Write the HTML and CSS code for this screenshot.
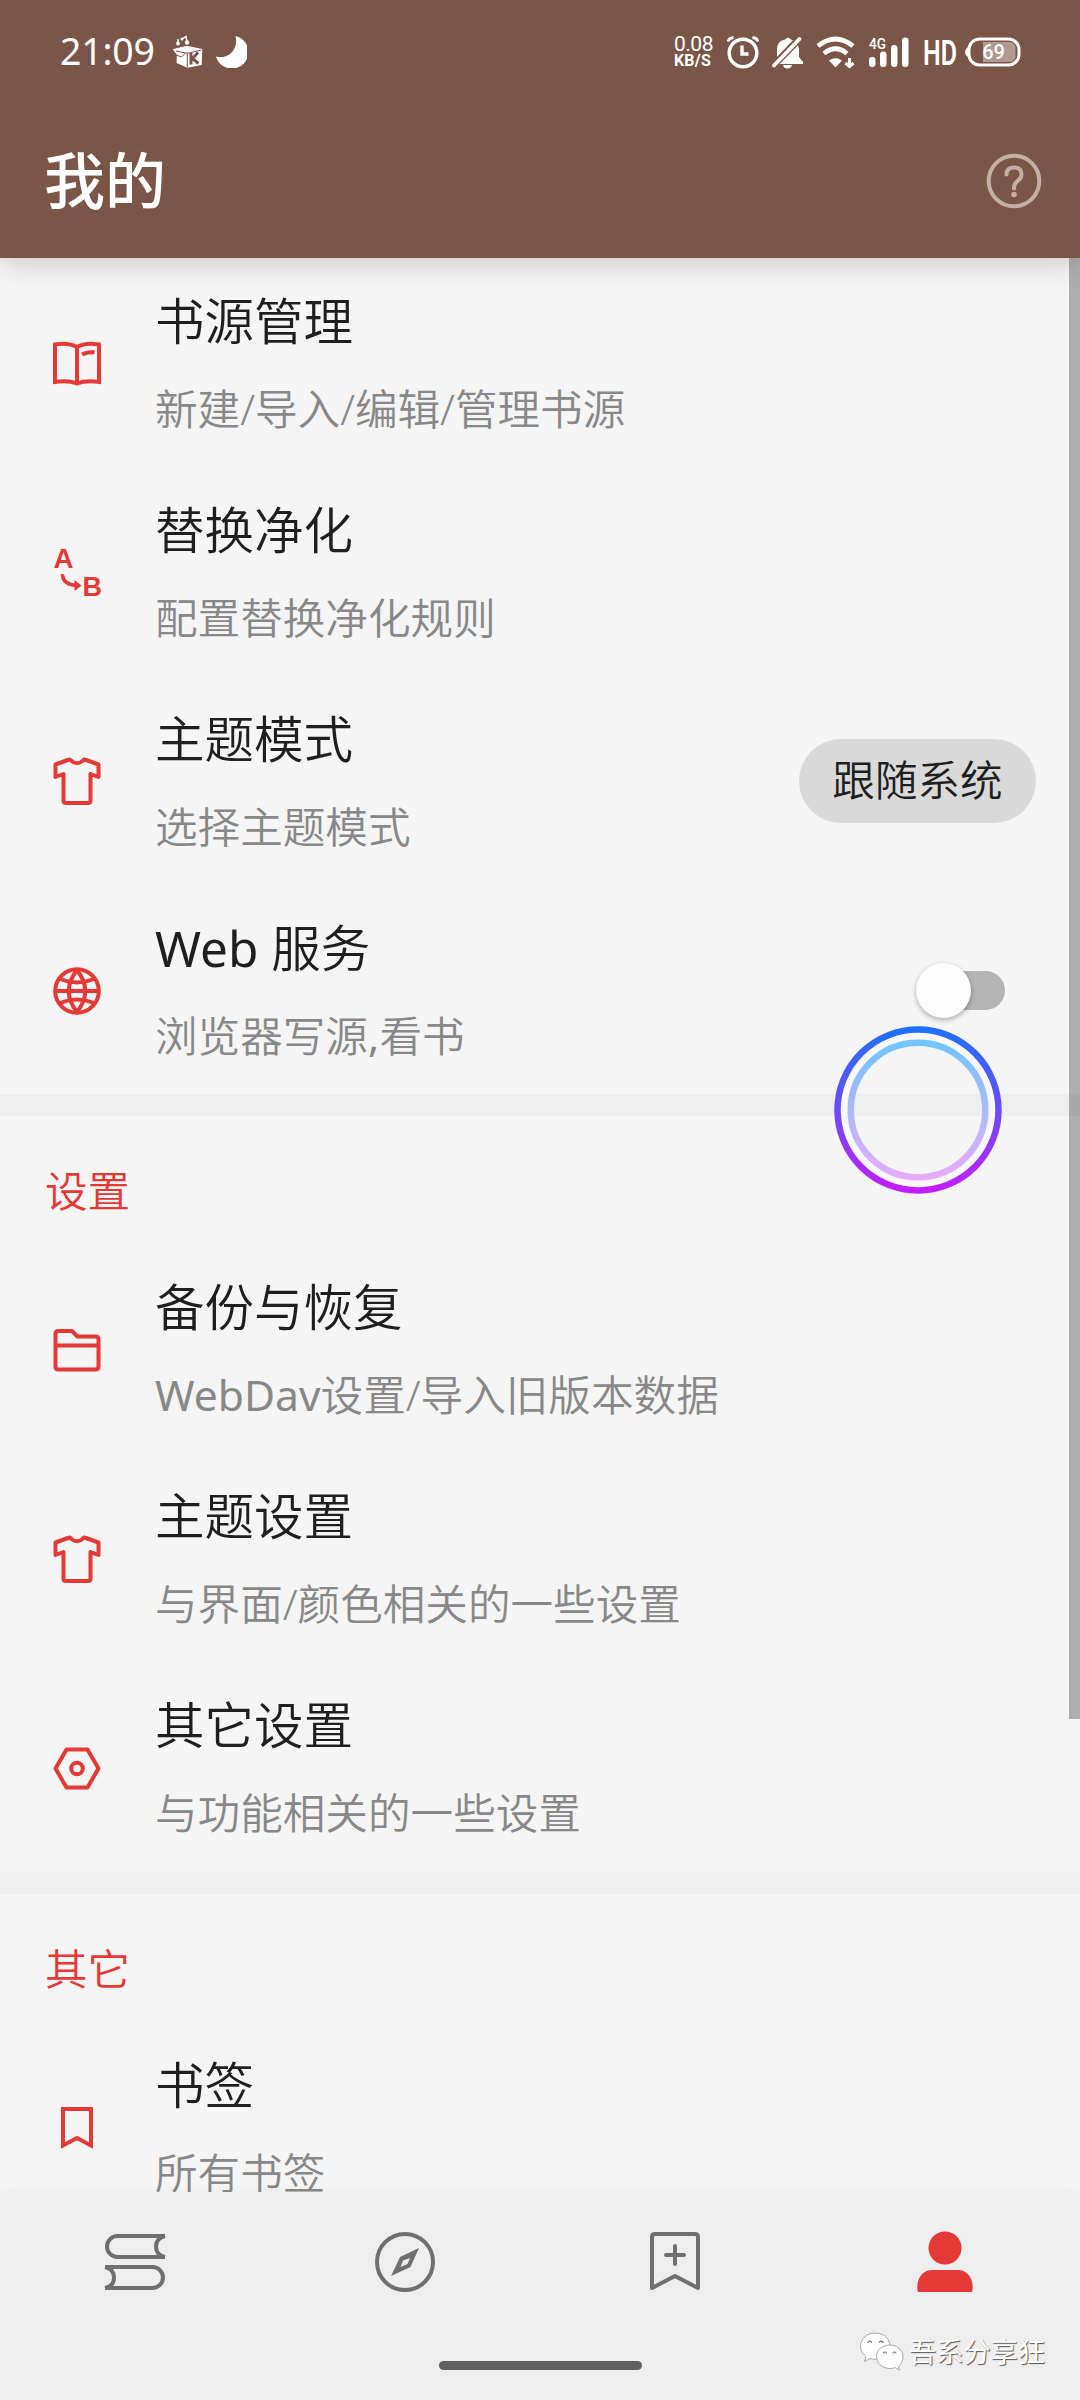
FILE: index.html
```html
<!DOCTYPE html>
<html lang="zh-CN">
<head>
<meta charset="utf-8">
<title>我的</title>
<link rel="stylesheet" href="styles.css">
</head>
<body>
<svg width="0" height="0" class="defs">
  <defs>
    <g id="shirt" fill="none" stroke="currentColor" stroke-width="4" stroke-linejoin="round">
      <path d="M24 12 26 11.500Q33 19 40 11.500L42 12 54.500 16.500V29L46.500 26V52.500Q46.500 55 44 55H22Q19.500 55 19.500 52.500V26L11.500 29V16.500Z"/>
    </g>
    <linearGradient id="ringOuter" x1="0" y1="0" x2="0" y2="1"><stop offset="0" stop-color="#2070fb"/><stop offset=".5" stop-color="#6b4cf6"/><stop offset="1" stop-color="#c31dff"/></linearGradient>
    <linearGradient id="ringInner" x1="0" y1="0" x2="0" y2="1"><stop offset="0" stop-color="#72c5ff"/><stop offset=".5" stop-color="#adb9ff"/><stop offset="1" stop-color="#e5acff"/></linearGradient>
  </defs>
</svg>
<div class="phone">
  <header class="header">
    <div class="status">
      <div class="status-left">
        <span class="clock">21:09</span>
        <svg class="app" width="32" height="34" viewBox="0 0 32 34"><path fill="#fff" d="M.7 14.300 14.700 10.700 30.300 14 29.700 30 15.300 32.700 4.700 28V19.500Z"/><path d="M4 16 15.300 18.300 29.500 15M15.300 18.300V32.500M4 20 9.500 22 13.500 18" fill="none" stroke="#7a5548" stroke-width="1"/><path d="M19 18V29.500M26 17.500 20.500 23.500 26.500 28.500" fill="none" stroke="#7a5548" stroke-width="3"/><path d="M6 8V4M10 4 14 1.500 15 7" fill="none" stroke="#fff" stroke-width="1.400"/><circle cx="6" cy="8.500" r="1.900" fill="#fff"/><circle cx="10" cy="4" r="1.500" fill="#fff"/><circle cx="15" cy="7.500" r="2.200" fill="#fff"/></svg>
        <svg class="moon" width="31" height="32" viewBox="0 0 31 32"><path fill="#fff" d="M19.500 0A16.500 16.500 0 1 1 0 20.500C11 24 23 14 19.500 0Z"/></svg>
      </div>
      <div class="status-right">
        <div class="speed"><span class="speed-num">0.08</span><span class="speed-unit">KB/S</span></div>
        <svg class="alarm" width="32" height="34" viewBox="0 0 32 34" fill="none" stroke="#fff"><circle cx="16" cy="18" r="13.800" stroke-width="3.500"/><path d="M15 10.500V19H21.500" stroke-width="3.400"/><path d="M1 6.500Q2 3 6.500 2.500M31 6.500Q30 3 25.500 2.500" stroke-width="2.800"/></svg>
        <svg class="bell" width="32" height="34" viewBox="0 0 32 34"><path fill="#fff" d="M5 24V14Q5 6 13 4.500 Q16 1 19 4.500Q26 6 27 14V22L31 27V29H1ZM11 30H20Q19 33.500 15.500 33.500Q12 33.500 11 30Z"/><path d="M0 32 29 2" stroke="#7a5548" stroke-width="7"/><path d="M2 30.500 27.500 4" stroke="#fff" stroke-width="3.800" stroke-linecap="round"/></svg>
        <svg class="wifi" width="40" height="34" viewBox="0 0 40 34"><path d="M2 11Q19.500-3 37 11M8 18.500Q19.500 9 31 18.500" fill="none" stroke="#fff" stroke-width="4.700"/><path d="M13 25.500Q19.500 21 26 25.500L19.500 32.500Z" fill="#fff"/><path d="M33.500 23V30M29.500 28 33.500 31.500 37.500 28" stroke="#fff" stroke-width="3" fill="none"/></svg>
        <svg class="signal" width="42" height="34" viewBox="0 0 42 34"><text x="0" y="14" class="net" textLength="17" lengthAdjust="spacingAndGlyphs">4G</text><g fill="#fff"><rect x="0" y="22" width="6.500" height="10" rx="3.200"/><rect x="11" y="16.500" width="6.500" height="15.500" rx="3.200"/><rect x="22" y="10" width="6.500" height="22" rx="3.200"/><rect x="33" y="2.500" width="6.500" height="29.500" rx="3.200"/></g></svg>
        <svg class="hd" width="34" height="48" viewBox="0 0 34 48"><text x="0" y="36.500" class="hd-text" textLength="34" lengthAdjust="spacingAndGlyphs">HD</text></svg>
        <svg class="battery" width="56" height="30" viewBox="0 0 56 30"><rect x="4" y="2" width="50" height="26" rx="10.500" fill="none" stroke="#fff" stroke-width="3"/><path d="M3 10Q0 12 0 15T3 20Z" fill="#fff"/><path d="M18 5H44Q50.500 5 50.500 11V19Q50.500 25 44 25H18Z" fill="#b09a93"/><text x="28.500" y="22" text-anchor="middle" class="level">69</text></svg>
      </div>
    </div>
    <div class="appbar">
      <h1 class="appbar-title">我的</h1>
      <svg class="help" width="56" height="56" viewBox="0 0 56 56" fill="none" stroke="#c5aea5" stroke-width="4"><circle cx="28" cy="28" r="25.300"/><path d="M20.500 21.500Q20.500 14.500 28 14.500T35.500 21.500Q35.500 25 31.500 28T28 35.500" stroke-linecap="round"/><circle cx="28" cy="41.500" r="2.800" fill="#c5aea5" stroke="none"/></svg>
    </div>
  </header>

  <main class="content">
    <section class="group group-first">
      <div class="row">
        <svg class="row-icon" viewBox="0 0 66 66" fill="none" stroke="currentColor" stroke-width="4"><path d="M11 14.500Q24 12 33 17Q42 12 55 14.500V52Q42 50 33 53.500Q24 50 11 52ZM33 17V53"/><path d="M38 24.500Q43 22 50.500 22" stroke-width="4"/></svg>
        <div class="row-text"><div class="title">书源管理</div><div class="summary">新建/导入/编辑/管理书源</div></div>
      </div>
      <div class="row">
        <svg class="row-icon" viewBox="0 0 66 66"><text x="9.500" y="29" class="ab" textLength="20" lengthAdjust="spacingAndGlyphs">A</text><text x="38.500" y="57" class="ab" textLength="19.500" lengthAdjust="spacingAndGlyphs">B</text><path d="M18.500 36.500Q20 46 33 46.500" fill="none" stroke="currentColor" stroke-width="3.600" stroke-linecap="round"/><path d="M30.500 41 37.500 46.500 30.500 52Z" fill="currentColor"/></svg>
        <div class="row-text"><div class="title">替换净化</div><div class="summary">配置替换净化规则</div></div>
      </div>
      <div class="row">
        <svg class="row-icon" viewBox="0 0 66 66"><use href="#shirt"/></svg>
        <div class="row-text"><div class="title">主题模式</div><div class="summary">选择主题模式</div></div>
        <div class="chip">跟随系统</div>
      </div>
      <div class="row">
        <svg class="row-icon" viewBox="0 0 66 66" fill="none" stroke="currentColor" stroke-width="4"><circle cx="33" cy="34" r="21.800"/><path d="M33 13Q16.500 34 33 55Q49.500 34 33 13M11 34H55M16 22Q33 29 50 22M16 46Q33 39 50 46"/></svg>
        <div class="row-text"><div class="title"><span class="latin">Web </span>服务</div><div class="summary">浏览器写源<span class="latin">,</span>看书</div></div>
        <div class="switch"><div class="thumb"></div></div>
      </div>
    </section>
    <section class="group">
      <h2 class="group-title">设置</h2>
      <div class="row">
        <svg class="row-icon" viewBox="0 0 66 66" fill="none" stroke="currentColor" stroke-width="4" stroke-linejoin="round"><path d="M11.500 17Q11.500 14 14.500 14H28L33.500 19.500H51.500Q54.500 19.500 54.500 22.500V49.500Q54.500 52.500 51.500 52.500H14.500Q11.500 52.500 11.500 49.500ZM11.500 28.500H54.500"/></svg>
        <div class="row-text"><div class="title">备份与恢复</div><div class="summary"><span class="latin">WebDav</span>设置/导入旧版本数据</div></div>
      </div>
      <div class="row">
        <svg class="row-icon" viewBox="0 0 66 66"><use href="#shirt"/></svg>
        <div class="row-text"><div class="title">主题设置</div><div class="summary">与界面/颜色相关的一些设置</div></div>
      </div>
      <div class="row">
        <svg class="row-icon" viewBox="0 0 66 66" fill="none" stroke="currentColor" stroke-width="4" stroke-linejoin="round"><path d="M22.500 14.500H43.500L54.500 33.500 43.500 52.500H22.500L11.500 33.500Z"/><circle cx="33" cy="33.500" r="5.800"/></svg>
        <div class="row-text"><div class="title">其它设置</div><div class="summary">与功能相关的一些设置</div></div>
      </div>
    </section>
    <section class="group">
      <h2 class="group-title">其它</h2>
      <div class="row">
        <svg class="row-icon" viewBox="0 0 66 66" fill="none" stroke="currentColor" stroke-width="4"><path d="M19 14H47V50.500L33 43 19 50.500Z"/></svg>
        <div class="row-text"><div class="title">书签</div><div class="summary">所有书签</div></div>
      </div>
    </section>
    <div class="scrollbar"></div>
  </main>

  <footer class="footer">
    <nav class="nav">
      <svg width="66" height="66" viewBox="0 0 66 66" fill="none" stroke="#6f6f6f" stroke-width="4"><path d="M63 7H15.500A10.500 10.500 0 0 0 15.500 28H63M63 7Q54 9 54 17.500T63 28M3 38H50.500A10.500 10.500 0 0 1 50.500 59H3M3 38Q12 40 12 48.500T3 59"/></svg>
      <svg width="66" height="66" viewBox="0 0 66 66" fill="none" stroke="#6f6f6f" stroke-width="4"><circle cx="33" cy="33" r="28"/><path fill="#6f6f6f" fill-rule="evenodd" stroke="none" d="M47 19 28 28 19 47 38.500 38ZM38 29 35.500 35 28.500 38 31 31.500Z"/></svg>
      <svg width="66" height="66" viewBox="0 0 66 66" fill="none" stroke="#6f6f6f" stroke-width="4" stroke-linejoin="round" stroke-linecap="round"><path d="M10 59V8Q10 5 13 5H53Q56 5 56 8V59L33 47Z"/><path d="M33 17V35M24 26H42"/></svg>
      <svg width="66" height="66" viewBox="0 0 66 66" fill="#e53935"><circle cx="33" cy="19" r="16.500"/><path d="M5.500 61.500C4 48 12 41 20 41H46C54 41 62 48 60.500 61.500Q60.500 63 59 63H7Q5.500 63 5.500 61.500Z"/></svg>
    </nav>
    <div class="home-bar"></div>
    <div class="watermark">
      <svg width="44" height="40" viewBox="0 0 44 40"><g fill="#fff" stroke="#aaa" stroke-width="1"><path d="M15 1C7 1 .500 7 .500 14Q.500 20.500 6 24.500L4.500 29.500 10 26.500Q14 28 18 27C30 26 31 17 30 12 Q27 1 15 1Z"/><path d="M30 13C22 13 16.500 18 16.500 24.500S22 36.500 30 36.500Q33 36.500 35 35.500L39.500 38 38.500 34Q43 30.500 43 24.500C43 18 37 13 30 13Z"/></g><g fill="none" stroke="#777" stroke-width="1.200"><path d="M8 11a1.800 1.800 0 0 1 3.600 0M19.500 11a1.800 1.800 0 0 1 3.600 0M23.500 21.500a1.500 1.500 0 0 1 3 0M33 21.500a1.500 1.500 0 0 1 3 0"/></g></svg>
      <span>吾系分享狂</span>
    </div>
  </footer>

  <svg class="touch-ring" width="168" height="168" viewBox="0 0 168 168" fill="none"><circle cx="84" cy="84" r="74" stroke="#f9f9fd" stroke-width="12"/><circle cx="84" cy="84" r="80.500" stroke="url(#ringOuter)" stroke-width="6.500"/><circle cx="84" cy="84" r="67.300" stroke="url(#ringInner)" stroke-width="6.500"/></svg>
</div>
</body>
</html>
```
FILE: styles.css
```css
* { box-sizing: border-box; }
body { margin: 0; background: #f5f5f5; font-family: "Noto Sans", "Noto Sans CJK SC", sans-serif; color: #1f1f1f; }
.defs { position: absolute; }
.phone { position: relative; width: 1080px; height: 2400px; overflow: hidden; display: flex; flex-direction: column; }
svg { display: block; flex: none; }

.header { height: 258px; flex: none; background: #7a5548; color: #fff; position: relative; z-index: 2; box-shadow: 0 4px 28px rgba(0,0,0,.2); }
.status { height: 104px; padding: 0 59px 0 60px; display: flex; justify-content: space-between; align-items: center; }
.status-left, .status-right { display: flex; align-items: center; }
.clock { font-size: 37.5px; line-height: 44px; width: 94px; letter-spacing: -.2px; white-space: nowrap; padding-bottom: 2px; }
.app { margin-left: 18px; }
.moon { margin-left: 12px; }
.speed { display: flex; flex-direction: column; width: 41px; font-family: Roboto, sans-serif; }
.speed-num { font-size: 21px; line-height: 18px; letter-spacing: -.5px; }
.speed-unit { font-size: 16px; line-height: 16px; font-weight: 700; letter-spacing: .2px; }
.alarm { margin-left: 12px; }
.bell { margin-left: 13px; }
.wifi { margin-left: 12px; }
.signal { margin-left: 13px; }
.net { font-family: Roboto, sans-serif; font-size: 15px; font-weight: 500; fill: #fff; }
.hd { margin-left: 12px; }
.hd-text { font-family: Roboto, sans-serif; font-size: 35px; font-weight: 600; fill: #fff; }
.battery { margin-left: 8px; }
.level { font-family: Roboto, sans-serif; font-size: 20px; font-weight: 500; fill: #fff; }
.appbar { height: 154px; padding: 0 38px 0 44px; display: flex; align-items: center; justify-content: space-between; }
.appbar-title { margin: 0; font-size: 61px; line-height: 72px; font-weight: 500; }

.content { flex: 1; min-height: 0; overflow: hidden; position: relative; }
.group + .group { border-top: 22px solid #eee; }
.group-title { margin: 0; height: 129px; padding: 42px 0 0 45px; font-size: 42.6px; line-height: 64px; font-weight: 350; color: #e53935; }
.row { height: 209px; padding: 0 44px; display: flex; align-items: center; }
.row-icon { width: 66px; height: 66px; color: #e53935; margin: 1px 45px 0 0; }
.ab { font-family: "Liberation Sans", sans-serif; font-size: 27px; font-weight: 700; fill: currentColor; }
.row-text { flex: 1; display: flex; flex-direction: column; gap: 19px; padding-bottom: 2px; font-weight: 350; }
.group-first .row-text { padding-bottom: 0; }
.latin { font-weight: 400; }
.title { font-size: 49.5px; line-height: 72px; }
.summary { font-size: 42.6px; line-height: 64px; color: #888; }
.chip { width: 237px; height: 84px; border-radius: 42px; background: #d9d9d9; display: flex; align-items: center; justify-content: center; font-size: 42.6px; line-height: 64px; padding-bottom: 3px; font-weight: 350; }
.switch { width: 84px; height: 39px; margin: 1px 31px 0 0; border-radius: 20px; background: #b4b4b4; display: flex; align-items: center; }
.thumb { width: 55px; height: 55px; margin-left: -5px; border-radius: 50%; background: #fdfdfd; box-shadow: 0 2px 5px rgba(0,0,0,.3); flex: none; }
.scrollbar { position: absolute; right: 0; top: 0; width: 11px; height: 1461px; background: rgba(0,0,0,.29); }

.footer { height: 208px; flex: none; background: #eee; position: relative; box-shadow: 0 -2px 8px rgba(0,0,0,.04); display: flex; flex-direction: column; align-items: center; }
.nav { width: 100%; height: 140px; display: grid; grid-template-columns: repeat(4, 1fr); justify-items: center; align-items: center; }
.home-bar { width: 203px; height: 9px; margin-top: 29px; border-radius: 5px; background: #616161; }
.watermark { position: absolute; left: 860px; top: 140px; display: flex; gap: 5px; align-items: center; font-size: 27.2px; line-height: 40px; color: #fff; text-shadow: 1px 1px 1px #555; white-space: nowrap; }
.touch-ring { position: absolute; left: 833.5px; top: 1026px; z-index: 3; }
```
